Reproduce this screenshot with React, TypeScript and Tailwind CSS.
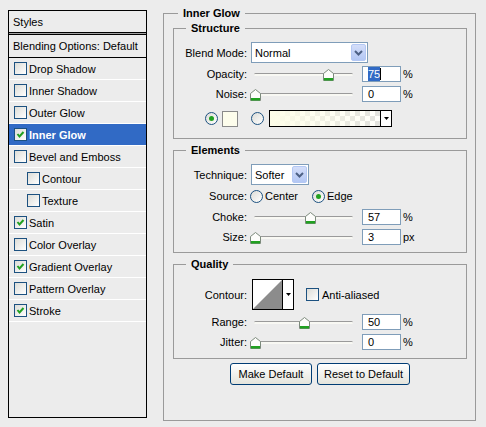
import type { ReactNode } from 'react'

function Check({ checked }: { checked?: boolean }) {
  return (
    <span className="flex h-[13px] w-[13px] shrink-0 items-center justify-center border border-[#1c5180] bg-linear-to-br from-[#dcdcd7] to-white">
      {checked && (
        <svg width="9" height="9" viewBox="0 0 9 9">
          <path d="M1.5 4 L3.5 6.5 L7.5 2" fill="none" stroke="#21a121" strokeWidth="2" />
        </svg>
      )}
    </span>
  )
}

function Radio({ on }: { on?: boolean }) {
  return (
    <span className="flex h-[13px] w-[13px] shrink-0 items-center justify-center rounded-full border border-[#1c5180] bg-linear-to-br from-[#dcdcd7] to-white">
      {on && <span className="h-[5px] w-[5px] rounded-full bg-[#21a121]" />}
    </span>
  )
}

function StyleRow({ label, checked, indent, active }: { label: string; checked?: boolean; indent?: boolean; active?: boolean }) {
  return (
    <div
      className={`flex h-[22px] shrink-0 items-center border-b border-white ${indent ? 'pl-[18px]' : 'pl-[5px]'} ${active ? 'bg-[#316ac5] font-bold text-white' : ''}`}
    >
      <Check checked={checked} />
      <span className="ml-[2px]">{label}</span>
    </div>
  )
}

function Group({ title, className, children }: { title: string; className?: string; children: ReactNode }) {
  return (
    <fieldset className={`border border-[#9a9a9a] ${className ?? ''}`}>
      <legend className="ml-[12px] px-[5px] font-bold leading-[14px]">{title}</legend>
      {children}
    </fieldset>
  )
}

function Row({ label, className, children }: { label: string; className?: string; children: ReactNode }) {
  return (
    <div className={`flex items-center ${className ?? ''}`}>
      <span className="w-[73px] shrink-0 text-right">{label}</span>
      {children}
    </div>
  )
}

function Slider({ value }: { value: number }) {
  return (
    <div className="relative ml-[4px] h-[16px] w-[106px] shrink-0">
      <div className="absolute left-[3px] right-[4px] top-[7px] h-[3px] rounded-full border-t border-[#9a9a9a] bg-[#f8f8f3]" />
      <svg className="absolute top-[3px]" style={{ left: 4 + value * 0.97 - 5 }} width="11" height="12" viewBox="0 0 11 12">
        <path d="M0.5 4.5 L5.5 0.5 L10.5 4.5 L10.5 11.5 L0.5 11.5 Z" fill="#fdfdfb" stroke="#7c8a7c" />
        <rect x="1" y="9" width="9" height="2.5" fill="#21a121" />
      </svg>
    </div>
  )
}

function Num({ children }: { children: ReactNode }) {
  return (
    <div className="ml-[5px] flex h-[16px] w-[39px] shrink-0 items-center border border-[#7f9db9] bg-white pl-[5px]">
      {children}
    </div>
  )
}

function Chevron() {
  return (
    <span className="m-[1px] flex h-[17px] w-[15px] shrink-0 items-center justify-center rounded-[2px] border border-[#b4c8f4] bg-linear-to-b from-[#d4def9] to-[#b3c7f4]">
      <svg width="9" height="6" viewBox="0 0 9 6">
        <path d="M1 1 L4.5 4.5 L8 1" fill="none" stroke="#4d6185" strokeWidth="2" />
      </svg>
    </span>
  )
}

function Arrow() {
  return (
    <svg width="5" height="3" viewBox="0 0 5 3">
      <path d="M0 0 L5 0 L2.5 3 Z" fill="#000" />
    </svg>
  )
}

function SliderRow({ label, value, unit, className, children }: { label: string; value: number; unit: string; className?: string; children: ReactNode }) {
  return (
    <Row label={label} className={`h-[16px] ${className ?? ''}`}>
      <Slider value={value} />
      <Num>{children}</Num>
      <span className="ml-[2px]">{unit}</span>
    </Row>
  )
}

export default function App() {
  return (
    <div className="flex h-[427px] w-[486px] items-start bg-[#ececec] font-['Liberation_Sans',Arial,sans-serif] text-[11px] leading-[14px] text-black">
      {/* styles list */}
      <div className="ml-[8px] mt-[10px] flex h-[408px] w-[139px] shrink-0 flex-col border border-black">
        <div className="flex h-[21px] shrink-0 items-center pl-[4px]">Styles</div>
        <div className="h-[3px] shrink-0 border-y border-black bg-[#a0a0a0]" />
        <div className="flex h-[23px] shrink-0 items-center border-b border-black pl-[4px]">Blending Options: Default</div>
        <StyleRow label="Drop Shadow" />
        <StyleRow label="Inner Shadow" />
        <StyleRow label="Outer Glow" />
        <StyleRow label="Inner Glow" checked active />
        <StyleRow label="Bevel and Emboss" />
        <StyleRow label="Contour" indent />
        <StyleRow label="Texture" indent />
        <StyleRow label="Satin" checked />
        <StyleRow label="Color Overlay" />
        <StyleRow label="Gradient Overlay" checked />
        <StyleRow label="Pattern Overlay" />
        <StyleRow label="Stroke" checked />
      </div>

      {/* settings */}
      <fieldset className="ml-[16px] mt-[6px] w-[313px] shrink-0 border border-[#9a9a9a]">
        <legend className="ml-[14px] px-[5px] font-bold leading-[14px]">Inner Glow</legend>
        <div className="flex flex-col pb-[35px] pl-[9px] pr-[8px] pt-[1px]">
          <Group title="Structure" className="pb-[11px]">
            <Row label="Blend Mode:" className="mt-[7px] h-[21px]">
              <div className="ml-[4px] flex h-[21px] w-[117px] items-center border border-[#7f9db9] bg-white">
                <span className="flex-1 pl-[3px]">Normal</span>
                <Chevron />
              </div>
            </Row>
            <SliderRow label="Opacity:" value={75} unit="%" className="mt-[3px]">
              <span className="bg-[#316ac5] text-white">75</span>
              <span className="h-[12px] w-px bg-black" />
            </SliderRow>
            <SliderRow label="Noise:" value={0} unit="%" className="mt-[4px]">
              0
            </SliderRow>
            <div className="mt-[8px] flex h-[17px] items-center pl-[31px]">
              <Radio on />
              <span className="ml-[4px] h-[16px] w-[16px] border border-[#8a8a8a] bg-[#fdfdec]" />
              <span className="ml-[13px] flex">
                <Radio />
              </span>
              <div className="ml-[5px] flex h-[17px] w-[123px] border border-black">
                <div className="flex-1 bg-[linear-gradient(to_right,#fdfde8,rgba(253,253,232,0.2)),conic-gradient(#dcdcdc_25%,#fff_0_50%,#dcdcdc_0_75%,#fff_0)] [background-size:100%_100%,10px_10px]" />
                <div className="flex w-[11px] items-center justify-center border-l border-black bg-white">
                  <Arrow />
                </div>
              </div>
            </div>
          </Group>

          <Group title="Elements" className="mt-[4px] pb-[7px]">
            <Row label="Technique:" className="mt-[7px] h-[21px]">
              <div className="ml-[4px] flex h-[21px] w-[58px] items-center border border-[#7f9db9] bg-white">
                <span className="flex-1 pl-[3px]">Softer</span>
                <Chevron />
              </div>
            </Row>
            <Row label="Source:" className="mt-[3px] h-[16px]">
              <span className="ml-[3px] flex">
                <Radio />
              </span>
              <span className="ml-[2px] w-[47px]">Center</span>
              <Radio on />
              <span className="ml-[2px]">Edge</span>
            </Row>
            <SliderRow label="Choke:" value={57} unit="%" className="mt-[5px]">
              57
            </SliderRow>
            <SliderRow label="Size:" value={0} unit="px" className="mt-[4px]">
              3
            </SliderRow>
          </Group>

          <Group title="Quality" className="mt-[4px] pb-[8px]">
            <Row label="Contour:" className="mt-[8px] h-[31px]">
              <div className="ml-[5px] flex h-[31px] w-[42px] border border-black bg-white">
                <svg width="29" height="29" viewBox="0 0 29 29">
                  <path d="M0 29 L29 0 L29 29 Z" fill="#8c8c8c" />
                </svg>
                <div className="flex w-[11px] items-center justify-center border-l border-black">
                  <Arrow />
                </div>
              </div>
              <span className="ml-[12px] flex">
                <Check />
              </span>
              <span className="ml-[3px]">Anti-aliased</span>
            </Row>
            <SliderRow label="Range:" value={50} unit="%" className="mt-[4px]">
              50
            </SliderRow>
            <SliderRow label="Jitter:" value={0} unit="%" className="mt-[4px]">
              0
            </SliderRow>
          </Group>

          <div className="mt-[4px] flex justify-center gap-[5px]">
            <button className="h-[22px] w-[82px] rounded-[3px] border border-[#003c74] bg-linear-to-b from-white to-[#e4e4dc]">
              Make Default
            </button>
            <button className="h-[22px] w-[93px] rounded-[3px] border border-[#003c74] bg-linear-to-b from-white to-[#e4e4dc]">
              Reset to Default
            </button>
          </div>
        </div>
      </fieldset>
    </div>
  )
}
